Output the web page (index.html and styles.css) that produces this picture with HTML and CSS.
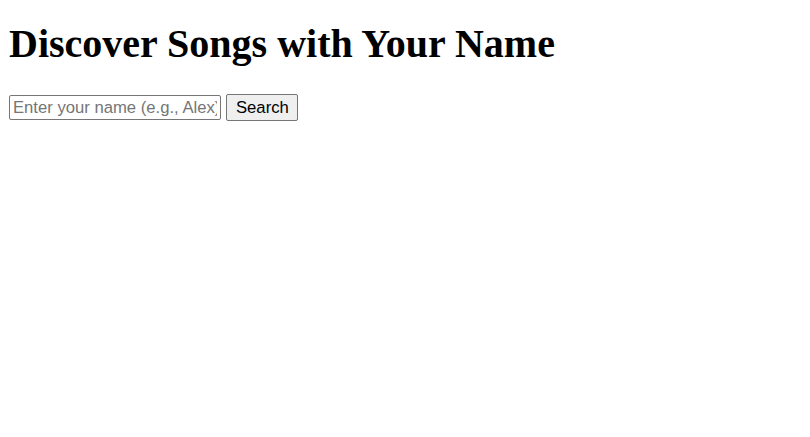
FILE: index.html
```html
<!DOCTYPE html>
<html lang="en">
<head>
    <meta charset="UTF-8">
    <meta name="viewport" content="width=device-width, initial-scale=1.0">
    <title>Discover Songs with Your Name</title>
    <link rel="stylesheet" href="styles.css">
</head>
<body>
    <h1>Discover Songs with Your Name</h1>
    <div class="search-row">
        <input type="text" id="name-input" class="name-input" placeholder="Enter your name (e.g., Alex)">
        <button class="search-button">Search</button>
    </div>
    <div id="results"></div>
</body>
</html>
```

FILE: styles.css
```css
body {
    font-family: "Liberation Serif", "Times New Roman", serif;
    margin: 9px;
    color: #000;
    background-color: #fff;
}
h1 {
    font-size: 40px;
    line-height: 44px;
    font-weight: bold;
    margin: 13px 0 28px;
}
.search-row {
    display: flex;
    align-items: center;
    gap: 5px;
}
.name-input {
    font-family: "Liberation Sans", Arial, sans-serif;
    font-size: 16.67px;
    width: 212px;
    height: 25px;
    box-sizing: border-box;
    padding: 0 3px;
    border: 1px solid #767676;
    border-radius: 2px;
    color: #000;
}
.name-input::placeholder {
    color: #757575;
}
.search-button {
    font-family: "Liberation Sans", Arial, sans-serif;
    font-size: 16.67px;
    width: 72px;
    height: 27px;
    box-sizing: border-box;
    padding: 0 9px;
    background-color: #efefef;
    border: 1px solid #767676;
    border-radius: 2px;
    color: #000;
}
```
